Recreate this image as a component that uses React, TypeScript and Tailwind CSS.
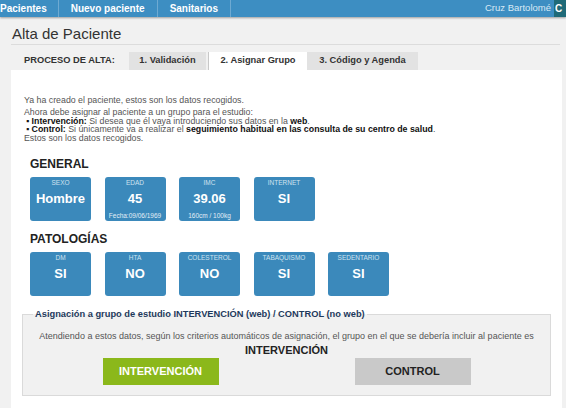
import React from "react";

const F = { fontFamily: '"Liberation Sans", Arial, sans-serif' };

function Box({ label, value, sub }: { label: string; value: string; sub?: string }) {
  return (
    <div className="w-[61px] h-[44px] rounded-[3px] bg-[#3b89bb] flex flex-col items-center pt-[2px] pb-[1px] text-white">
      <div className="text-[6.5px] leading-[8px] text-[#cfe2ef]">{label}</div>
      <div className="text-[13px] leading-[15px] font-bold mt-[4px]">{value}</div>
      {sub ? <div className="mt-auto text-[6.5px] leading-[8px] text-[#e3eef6] whitespace-nowrap">{sub}</div> : null}
    </div>
  );
}

export default function App() {
  return (
    <div style={F} className="w-[566px] h-[408px] overflow-hidden bg-[#f1f1f1] flex flex-col">
      {/* top nav */}
      <div className="h-[17px] shrink-0 bg-[#3d8ec2] flex items-stretch text-white text-[10px] font-bold shadow-[0_1px_2px_rgba(0,0,0,0.35)] relative z-10">
        <div className="flex items-center pr-[11px] border-r border-[#6eaad2]">Pacientes</div>
        <div className="flex items-center px-[12px] border-r border-[#6eaad2]">Nuevo paciente</div>
        <div className="flex items-center px-[12px] border-r border-[#6eaad2]">Sanitarios</div>
        <div className="flex-1" />
        <div className="flex items-center pr-[3px] text-[9.5px] font-normal text-[#d8e9f5]">Cruz Bartolomé</div>
        <div className="w-[12px] bg-[#1f6a78] flex items-center pl-[1px] text-[10px]">C</div>
      </div>

      <div className="flex-1 flex flex-col pl-[11px] pr-[4px]">
        <div className="pt-[8px] pb-[1px] text-[15px] leading-[18px] text-[#333] border-b border-[#dcdcdc] pl-[1px] mr-[2px]">
          Alta de Paciente
        </div>

        {/* tabs */}
        <div className="mt-[7px] h-[18px] flex items-stretch text-[9.3px] font-bold text-[#333]">
          <div className="flex items-center pl-[13px] w-[118px]">PROCESO DE ALTA:</div>
          <div className="w-[77px] bg-[#e2e2e2] flex items-center justify-center">1. Validación</div>
          <div className="w-[2px]" />
          <div className="w-[99px] bg-white border-l border-[#c8c8c8] flex items-center justify-center">2. Asignar Grupo</div>
          <div className="w-[111px] bg-[#e2e2e2] flex items-center justify-center">3. Código y Agenda</div>
        </div>

        {/* panel */}
        <div className="flex-1 bg-white pt-[25px] flex flex-col">
          <div className="pl-[13px] text-[8.8px] text-[#555]">
            <div className="leading-[10px]">Ya ha creado el paciente, estos son los datos recogidos.</div>
            <div className="leading-[9px] mt-[2.5px]">Ahora debe asignar al paciente a un grupo para el estudio:</div>
            <div className="leading-[8.5px] pl-[2px]">
              <span className="text-[#111]">▪ </span>
              <b className="text-[#111]">Intervención:</b> Si desea que él vaya introduciendo sus datos en la <b className="text-[#111]">web</b>.
            </div>
            <div className="leading-[8.5px] pl-[2px]">
              <span className="text-[#111]">▪ </span>
              <b className="text-[#111]">Control:</b> Si únicamente va a realizar el <b className="text-[#111]">seguimiento habitual en las consulta de su centro de salud</b>.
            </div>
            <div className="leading-[8.5px]">Estos son los datos recogidos.</div>
          </div>

          <div className="pl-[19px]">
            <div className="mt-[15px] text-[12px] leading-[14px] font-bold text-[#222]">GENERAL</div>
            <div className="mt-[6px] flex gap-[13.5px]">
              <Box label="SEXO" value="Hombre" />
              <Box label="EDAD" value="45" sub="Fecha:09/06/1969" />
              <Box label="IMC" value="39.06" sub="160cm / 100kg" />
              <Box label="INTERNET" value="SI" />
            </div>

            <div className="mt-[11px] text-[12px] leading-[14px] font-bold text-[#222]">PATOLOGÍAS</div>
            <div className="mt-[6px] flex gap-[13.5px]">
              <Box label="DM" value="SI" />
              <Box label="HTA" value="NO" />
              <Box label="COLESTEROL" value="NO" />
              <Box label="TABAQUISMO" value="SI" />
              <Box label="SEDENTARIO" value="SI" />
            </div>
          </div>

          <fieldset className="mt-[13px] ml-[11px] mr-[11px] border border-[#dadada] bg-[#f1f1f1] px-0 pb-[10px]">
            <legend className="ml-[10px] px-[2px] text-[9.3px] leading-[10px] font-bold text-[#1e3a5c]">
              Asignación a grupo de estudio INTERVENCIÓN (web) / CONTROL (no web)
            </legend>
            <div className="mt-[12px] text-center text-[9px] leading-[10px] text-[#555] whitespace-nowrap">
              Atendiendo a estos datos, según los criterios automáticos de asignación, el grupo en el que se debería incluir al paciente es
            </div>
            <div className="mt-[3px] text-center text-[11px] leading-[13px] font-bold text-[#222]">INTERVENCIÓN</div>
            <div className="mt-[1px] flex justify-center gap-[136px]">
              <div className="w-[116px] h-[27px] bg-[#8bb81b] flex items-center justify-center text-white text-[11px] font-bold">INTERVENCIÓN</div>
              <div className="w-[116px] h-[27px] bg-[#c9c9c9] flex items-center justify-center text-[#222] text-[11px] font-bold">CONTROL</div>
            </div>
          </fieldset>
        </div>
      </div>
    </div>
  );
}
